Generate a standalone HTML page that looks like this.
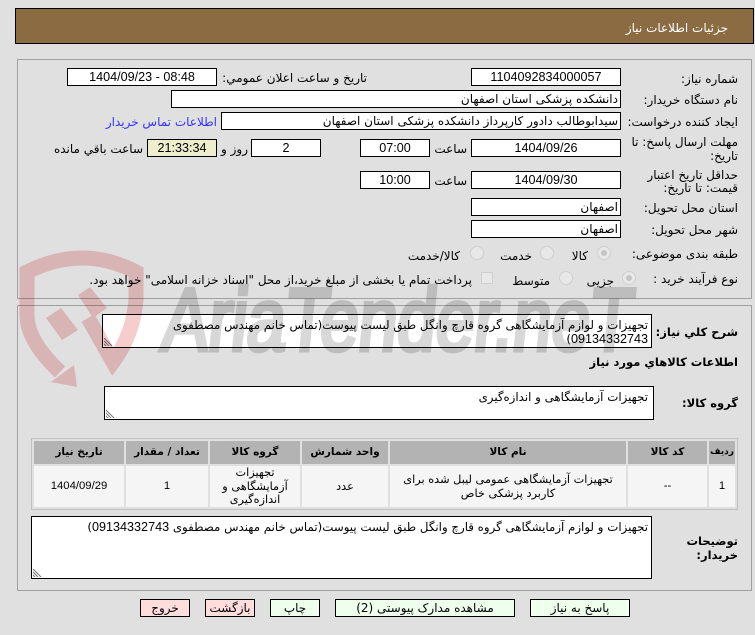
<!DOCTYPE html>
<html lang="fa"><head><meta charset="utf-8"><title>جزئیات اطلاعات نیاز</title>
<style>
html,body{margin:0;padding:0;width:755px;height:635px;overflow:hidden;background:#e0e0e0}
body{position:relative;font:12px/16px "DejaVu Sans","Liberation Sans",sans-serif;color:#000}
div{box-sizing:border-box}
.a{position:absolute}
.n{font:12.6px "Liberation Sans",sans-serif}
.t{position:absolute;white-space:nowrap;direction:rtl;height:16px}
.d{font-size:11.8px}
.b{font-weight:bold;font-size:11.5px;color:#000}
.i{position:absolute;background:#fff;border:1px solid #000;height:18px;text-align:center;font:12.6px/16px "Liberation Sans",sans-serif;color:#000}
.r{direction:rtl;text-align:right;padding-right:2px;font:12px/17px "DejaVu Sans",sans-serif}
.ta{position:absolute;background:#fff;border:1px solid #000}
.h{position:absolute;top:441px;height:23px;background:#b3b3b3;text-align:center;font-weight:bold;font-size:10.5px;line-height:23px;direction:rtl;color:#000;white-space:nowrap}
.c{position:absolute;top:466px;height:41px;background:#f5f5f5;display:flex;align-items:center;justify-content:center;text-align:center;direction:rtl;line-height:13.5px;font-size:11.3px}
.btn{position:absolute;top:599px;height:18px;border:1px solid #000;text-align:center;line-height:17px;direction:rtl;color:#000}
.g{background:#eeffee}.p{background:#ffdddd}
.rad{position:absolute;width:14px;height:14px;border-radius:50%;border:1px solid #cfcfcf;background:#e8e8e8}
.rad.on:after{content:"";position:absolute;left:3px;top:3px;width:6px;height:6px;border-radius:50%;background:#c4c4c4}
svg.hd{position:absolute;left:1px;bottom:1px;width:9px;height:9px}
</style></head><body>

<div class="a" style="left:15px;top:8px;width:739px;height:36px;background:#8b6c42;border:1px solid #000"></div>
<div class="t" style="right:27px;top:20px;color:#fff">جزئیات اطلاعات نیاز</div>

<div class="a" style="left:17px;top:59px;width:735px;height:240px;border:1px solid #a0a0a0"></div>
<div class="a" style="left:17px;top:305px;width:735px;height:286px;border:1px solid #a0a0a0"></div>

<div class="t" style="right:17px;top:71px">شماره نیاز:</div>
<div class="i" style="left:471px;top:68px;width:150px">1104092834000057</div>
<div class="t" style="right:388px;top:70px">تاریخ و ساعت اعلان عمومي:</div>
<div class="i" style="left:67px;top:68px;width:150px">1404/09/23 - 08:48</div>

<div class="t" style="right:17px;top:92px">نام دستگاه خریدار:</div>
<div class="i r" style="left:171px;top:90px;width:450px">دانشکده پزشکی استان اصفهان</div>

<div class="t" style="right:17px;top:114px">ایجاد کننده درخواست:</div>
<div class="i r" style="left:221px;top:112px;width:400px">سیدابوطالب دادور کارپرداز دانشکده پزشکی استان اصفهان</div>
<div class="t" style="right:538px;top:114px;color:#3333ff">اطلاعات تماس خریدار</div>

<div class="t" style="right:17px;top:134px">مهلت ارسال پاسخ: تا</div>
<div class="t" style="right:17px;top:148px">تاریخ:</div>
<div class="i" style="left:471px;top:139px;width:150px">1404/09/26</div>
<div class="t" style="right:288px;top:141px">ساعت</div>
<div class="i" style="left:360px;top:139px;width:70px">07:00</div>
<div class="i" style="left:251px;top:139px;width:70px">2</div>
<div class="t" style="right:507px;top:141px">روز و</div>
<div class="i" style="left:147px;top:139px;width:70px;background:#eeeecc">21:33:34</div>
<div class="t" style="right:612px;top:141px">ساعت باقي مانده</div>

<div class="t" style="right:17px;top:167px">حداقل تاریخ اعتبار</div>
<div class="t" style="right:17px;top:180px">قیمت: تا تاریخ:</div>
<div class="i" style="left:471px;top:171px;width:150px">1404/09/30</div>
<div class="t" style="right:288px;top:173px">ساعت</div>
<div class="i" style="left:360px;top:171px;width:70px">10:00</div>

<div class="t" style="right:17px;top:200px">استان محل تحویل:</div>
<div class="i r" style="left:471px;top:198px;width:150px">اصفهان</div>
<div class="t" style="right:17px;top:222px">شهر محل تحویل:</div>
<div class="i r" style="left:471px;top:220px;width:150px">اصفهان</div>

<div class="t" style="right:17px;top:246px">طبقه بندی موضوعی:</div>
<div class="rad on" style="left:597px;top:246px"></div>
<div class="t" style="right:167px;top:248px">کالا</div>
<div class="rad" style="left:540px;top:246px"></div>
<div class="t" style="right:223px;top:248px">خدمت</div>
<div class="rad" style="left:470px;top:246px"></div>
<div class="t" style="right:295px;top:248px">کالا/خدمت</div>

<div class="t" style="right:17px;top:271px">نوع فرآیند خرید :</div>
<div class="rad on" style="left:622px;top:271px"></div>
<div class="t" style="right:141px;top:273px">جزیی</div>
<div class="rad" style="left:559px;top:271px"></div>
<div class="t" style="right:205px;top:273px">متوسط</div>
<div class="a" style="left:481px;top:272px;width:12px;height:12px;border:1px solid #cfcfcf;background:#e8e8e8"></div>
<div class="t" style="right:283px;top:272px">پرداخت تمام یا بخشی از مبلغ خرید،از محل "اسناد خزانه اسلامی" خواهد بود.</div>

<div class="t b" style="right:17px;top:324px">شرح کلي نیاز:</div>
<div class="ta" style="left:102px;top:314px;width:550px;height:34px"><svg class="hd" viewBox="0 0 9 9"><path d="M0 1L8 9M0 4L5 9M0 7L2 9" stroke="#777" fill="none"/></svg></div>
<div class="t d" style="right:107px;top:317px">تجهیزات و لوازم آزمایشگاهی گروه قارچ وانگل طبق لیست پیوست(تماس  خانم مهندس مصطفوی</div>
<div class="t d" style="right:107px;top:331px"><span class="n">09134332743</span>)</div>

<div class="t b" style="right:17px;top:354px">اطلاعات کالاهاي مورد نیاز</div>

<div class="t b" style="right:17px;top:395px">گروه کالا:</div>
<div class="ta" style="left:104px;top:386px;width:550px;height:34px"><svg class="hd" viewBox="0 0 9 9"><path d="M0 1L8 9M0 4L5 9M0 7L2 9" stroke="#777" fill="none"/></svg></div>
<div class="t d" style="right:107px;top:389px">تجهیزات آزمایشگاهی و اندازه‌گیری</div>

<div class="a" style="left:31px;top:438px;width:707px;height:72px;border:1px solid #c0c0c0"></div>
<div class="h" style="left:709px;width:26px;font-size:9px">ردیف</div>
<div class="h" style="left:628px;width:79px">کد کالا</div>
<div class="h" style="left:390px;width:236px">نام کالا</div>
<div class="h" style="left:302px;width:86px">واحد شمارش</div>
<div class="h" style="left:210px;width:90px">گروه کالا</div>
<div class="h" style="left:126px;width:82px">تعداد / مقدار</div>
<div class="h" style="left:34px;width:90px">تاریخ نیاز</div>

<div class="c n" style="left:709px;width:26px">1</div>
<div class="c n" style="left:628px;width:79px">--</div>
<div class="c" style="left:390px;width:236px">تجهیزات آزمایشگاهی عمومی لیبل شده برای<br>کاربرد پزشکی خاص</div>
<div class="c" style="left:302px;width:86px">عدد</div>
<div class="c" style="left:210px;width:90px">تجهیزات<br>آزمایشگاهی و<br>اندازه‌گیری</div>
<div class="c n" style="left:126px;width:82px">1</div>
<div class="c n" style="left:34px;width:90px">1404/09/29</div>

<div class="t b" style="right:17px;top:533px">توضیحات</div>
<div class="t b" style="right:17px;top:547px">خریدار:</div>
<div class="ta" style="left:31px;top:516px;width:621px;height:63px"><svg class="hd" viewBox="0 0 9 9"><path d="M0 1L8 9M0 4L5 9M0 7L2 9" stroke="#777" fill="none"/></svg></div>
<div class="t d" style="right:107px;top:519px">تجهیزات و لوازم آزمایشگاهی گروه قارچ وانگل طبق لیست پیوست(تماس  خانم مهندس مصطفوی <span class="n">09134332743</span>)</div>

<div class="btn g" style="left:530px;width:100px">پاسخ به نیاز</div>
<div class="btn g" style="left:335px;width:180px">مشاهده مدارک پیوستی (2)</div>
<div class="btn g" style="left:270px;width:50px">چاپ</div>
<div class="btn p" style="left:205px;width:50px">بازگشت</div>
<div class="btn p" style="left:140px;width:50px">خروج</div>

<svg class="a" style="left:0;top:0;mix-blend-mode:multiply;pointer-events:none" width="755" height="635" viewBox="0 0 755 635">
  <g fill="none" stroke="#f6cdcd" stroke-width="15">
    <path d="M60 372C42 355 27 335 27 315V272Q83 244 136 272V300Q133 335 113 362L88 318"/>
  </g>
  <g fill="#f6cdcd">
    <polygon points="51,382 77,387 74,365"/>
    <polygon points="46,318 61,308 78,330 62,340"/>
    <polygon points="78,295 90,287 107,308 93,318"/>
  </g>
  <text x="0" y="0" transform="translate(160 350) skewX(-6)" font-family="Liberation Sans" font-size="88" fill="#d8d8d8" stroke="#d8d8d8" stroke-width="5" textLength="470" lengthAdjust="spacingAndGlyphs">AriaTender.neT</text>
</svg>
</body></html>
